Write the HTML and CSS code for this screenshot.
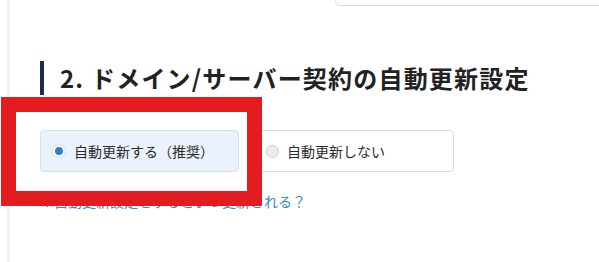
FILE: index.html
```html
<!DOCTYPE html>
<html lang="ja">
<head>
<meta charset="utf-8">
<link rel="stylesheet" href="styles.css">
</head>
<body>
<div class="page">
  <div class="top-box"></div>
  <h2 class="section-title">2. ドメイン/サーバー契約の自動更新設定</h2>
  <div class="options">
    <label class="option selected"><span class="radio"></span><span class="opt-text">自動更新する（推奨）</span></label>
    <label class="option"><span class="radio"></span><span class="opt-text">自動更新しない</span></label>
  </div>
  <a class="help-link">※自動更新設定をするといつ更新される？</a>
</div>
<div class="highlight"></div>
</body>
</html>
```
FILE: styles.css
```css
html, body {
  margin: 0;
  padding: 0;
  background: #ffffff;
}
body {
  font-family: "Noto Sans CJK JP", "Noto Sans", sans-serif;
  color: #333;
  width: 599px;
  height: 262px;
  overflow: hidden;
  position: relative;
}
.page {
  margin-left: 7px;
  border-left: 3px solid #f1f1f1;
  height: 262px;
  box-sizing: border-box;
  display: flex;
  flex-direction: column;
  padding-left: 30px;
}
.top-box {
  margin-left: 295px;
  height: 5px;
  border: 1px solid #dcdcdc;
  border-top: none;
  border-right: none;
  border-radius: 0 0 0 5px;
}
.section-title {
  margin: 55px 0 0 0;
  border-left: 4px solid #1b2a4e;
  padding-left: 16px;
  height: 34px;
  line-height: 34px;
  font-size: 24px;
  font-weight: 700;
  letter-spacing: 1.2px;
  color: #222;
}
.options {
  display: flex;
  gap: 15px;
  margin-top: 35px;
}
.option {
  display: flex;
  align-items: center;
  height: 42px;
  box-sizing: border-box;
  border: 1px solid #dcdcdc;
  border-radius: 4px;
  background: #fff;
  padding-left: 11px;
  font-size: 14px;
  color: #2b2b2b;
}
.option.selected {
  width: 199px;
  background: #eaf2fb;
  border-color: #d6e0ec;
}
.option:not(.selected) {
  width: 200px;
}
.radio {
  width: 13px;
  height: 13px;
  box-sizing: border-box;
  border-radius: 50%;
  border: 1px solid #d0d0d0;
  background: #ececec;
  margin-right: 8px;
  flex: none;
}
.option.selected .radio {
  background: #2e7fcc;
  border: 2px solid #fff;
  box-shadow: 0 0 0 1px #d6dde6;
  width: 12px;
  height: 12px;
  margin-left: 1px;
  margin-right: 9px;
}
.help-link {
  margin-top: 20px;
  margin-left: 0;
  font-size: 14px;
  line-height: 18px;
  color: #3d86c6;
}
.highlight {
  position: absolute;
  left: 1px;
  top: 97px;
  width: 261px;
  height: 109px;
  box-sizing: border-box;
  border: 15px solid #e31c1f;
}
```
